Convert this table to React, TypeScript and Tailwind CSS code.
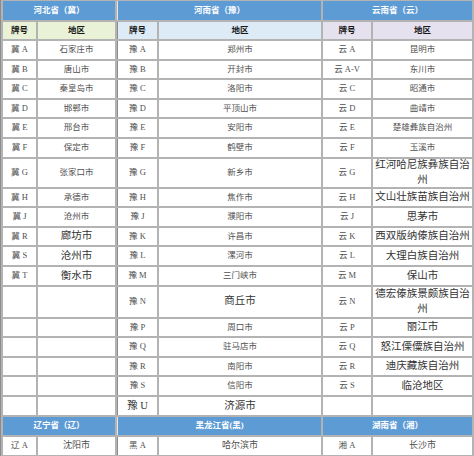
import React from "react";

type Row = {
  j?: [string, string];
  jBig?: boolean;
  y: [string, string];
  yBig?: boolean;
  yCodeBig?: boolean;
  c?: [string, string];
  cBig?: boolean;
};

const rows: Row[] = [
  { j: ["冀 A", "石家庄市"], y: ["豫 A", "郑州市"], c: ["云 A", "昆明市"] },
  { j: ["冀 B", "唐山市"], y: ["豫 B", "开封市"], c: ["云 A-V", "东川市"] },
  { j: ["冀 C", "秦皇岛市"], y: ["豫 C", "洛阳市"], c: ["云 C", "昭通市"] },
  { j: ["冀 D", "邯郸市"], y: ["豫 D", "平顶山市"], c: ["云 D", "曲靖市"] },
  { j: ["冀 E", "邢台市"], y: ["豫 E", "安阳市"], c: ["云 E", "楚雄彝族自治州"] },
  { j: ["冀 F", "保定市"], y: ["豫 F", "鹤壁市"], c: ["云 F", "玉溪市"] },
  { j: ["冀 G", "张家口市"], y: ["豫 G", "新乡市"], c: ["云 G", "红河哈尼族彝族自治州"], cBig: true },
  { j: ["冀 H", "承德市"], y: ["豫 H", "焦作市"], c: ["云 H", "文山壮族苗族自治州"], cBig: true },
  { j: ["冀 J", "沧州市"], y: ["豫 J", "濮阳市"], c: ["云 J", "思茅市"], cBig: true },
  { j: ["冀 R", "廊坊市"], jBig: true, y: ["豫 K", "许昌市"], c: ["云 K", "西双版纳傣族自治州"], cBig: true },
  { j: ["冀 S", "沧州市"], jBig: true, y: ["豫 L", "漯河市"], c: ["云 L", "大理白族自治州"], cBig: true },
  { j: ["冀 T", "衡水市"], jBig: true, y: ["豫 M", "三门峡市"], c: ["云 M", "保山市"], cBig: true },
  { y: ["豫 N", "商丘市"], yBig: true, c: ["云 N", "德宏傣族景颇族自治州"], cBig: true },
  { y: ["豫 P", "周口市"], c: ["云 P", "丽江市"], cBig: true },
  { y: ["豫 Q", "驻马店市"], c: ["云 Q", "怒江傈僳族自治州"], cBig: true },
  { y: ["豫 R", "南阳市"], c: ["云 R", "迪庆藏族自治州"], cBig: true },
  { y: ["豫 S", "信阳市"], c: ["云 S", "临沧地区"], cBig: true },
  { y: ["豫 U", "济源市"], yBig: true, yCodeBig: true },
];

const small = "text-[8.5px] text-[#505050]";
const big = "text-[10.5px] text-[#333333]";

function Cell({
  children,
  big: isBig,
  extra,
}: {
  children?: React.ReactNode;
  big?: boolean;
  extra?: string;
}) {
  return (
    <div
      className={`bg-white flex items-center justify-center text-center leading-[1.35] px-[2px] ${
        isBig ? big : small
      } ${extra ?? ""}`}
    >
      {children}
    </div>
  );
}

function Head({ children, extra }: { children: React.ReactNode; extra?: string }) {
  return (
    <div
      className={`col-span-2 bg-[#5d9bd5] flex items-center justify-center text-white font-bold text-[8.5px] ${
        extra ?? ""
      }`}
    >
      {children}
    </div>
  );
}

function Sub({ children, color, extra }: { children: React.ReactNode; color: string; extra?: string }) {
  return (
    <div
      className={`flex items-center justify-center font-bold text-[8.5px] text-[#1a1a1a] ${color} ${
        extra ?? ""
      }`}
    >
      {children}
    </div>
  );
}

export default function App() {
  return (
    <div
      className="w-[474px] h-[456px] bg-white overflow-hidden"
      style={{ fontFamily: '"Liberation Serif", "Noto Sans CJK SC", serif' }}
    >
      <div className="grid grid-cols-[33px_77px_40px_162px_48px_1fr] grid-rows-[19px_17px_repeat(6,17.6px)_28px_repeat(5,17.6px)_30px_repeat(5,17.6px)_18px_18px] gap-[2px] bg-[#b3b3b3] p-[1px] pl-[2px] pr-[2px] h-[456px] border-l border-[#8c8c8c]">
        <Head>河北省（冀）</Head>
        <Head extra="border-l border-[#e6e6e6]">河南省（豫）</Head>
        <Head>云南省（云）</Head>

        <Sub color="bg-[#e9f2d6]">牌号</Sub>
        <Sub color="bg-[#e9f2d6]">地区</Sub>
        <Sub color="bg-[#dcebf6]" extra="border-l border-[#8c8c8c]">牌号</Sub>
        <Sub color="bg-[#dcebf6]">地区</Sub>
        <Sub color="bg-[#e6e1ef]">牌号</Sub>
        <Sub color="bg-[#e6e1ef]">地区</Sub>

        {rows.map((r, i) => (
          <React.Fragment key={i}>
            <Cell>{r.j?.[0]}</Cell>
            <Cell big={r.jBig}>{r.j?.[1]}</Cell>
            <Cell big={r.yCodeBig} extra="border-l border-[#8c8c8c]">
              {r.y[0]}
            </Cell>
            <Cell big={r.yBig}>{r.y[1]}</Cell>
            <Cell>{r.c?.[0]}</Cell>
            <Cell big={r.cBig}>{r.c?.[1]}</Cell>
          </React.Fragment>
        ))}

        <Head>辽宁省（辽）</Head>
        <Head extra="border-l border-[#e6e6e6]">黑龙江省(黑)</Head>
        <Head>湖南省（湘）</Head>

        <Cell>辽 A</Cell>
        <Cell extra="text-[9px]">沈阳市</Cell>
        <Cell extra="border-l border-[#8c8c8c]">黑 A</Cell>
        <Cell extra="text-[9px]">哈尔滨市</Cell>
        <Cell>湘 A</Cell>
        <Cell extra="text-[9px]">长沙市</Cell>
      </div>
    </div>
  );
}
